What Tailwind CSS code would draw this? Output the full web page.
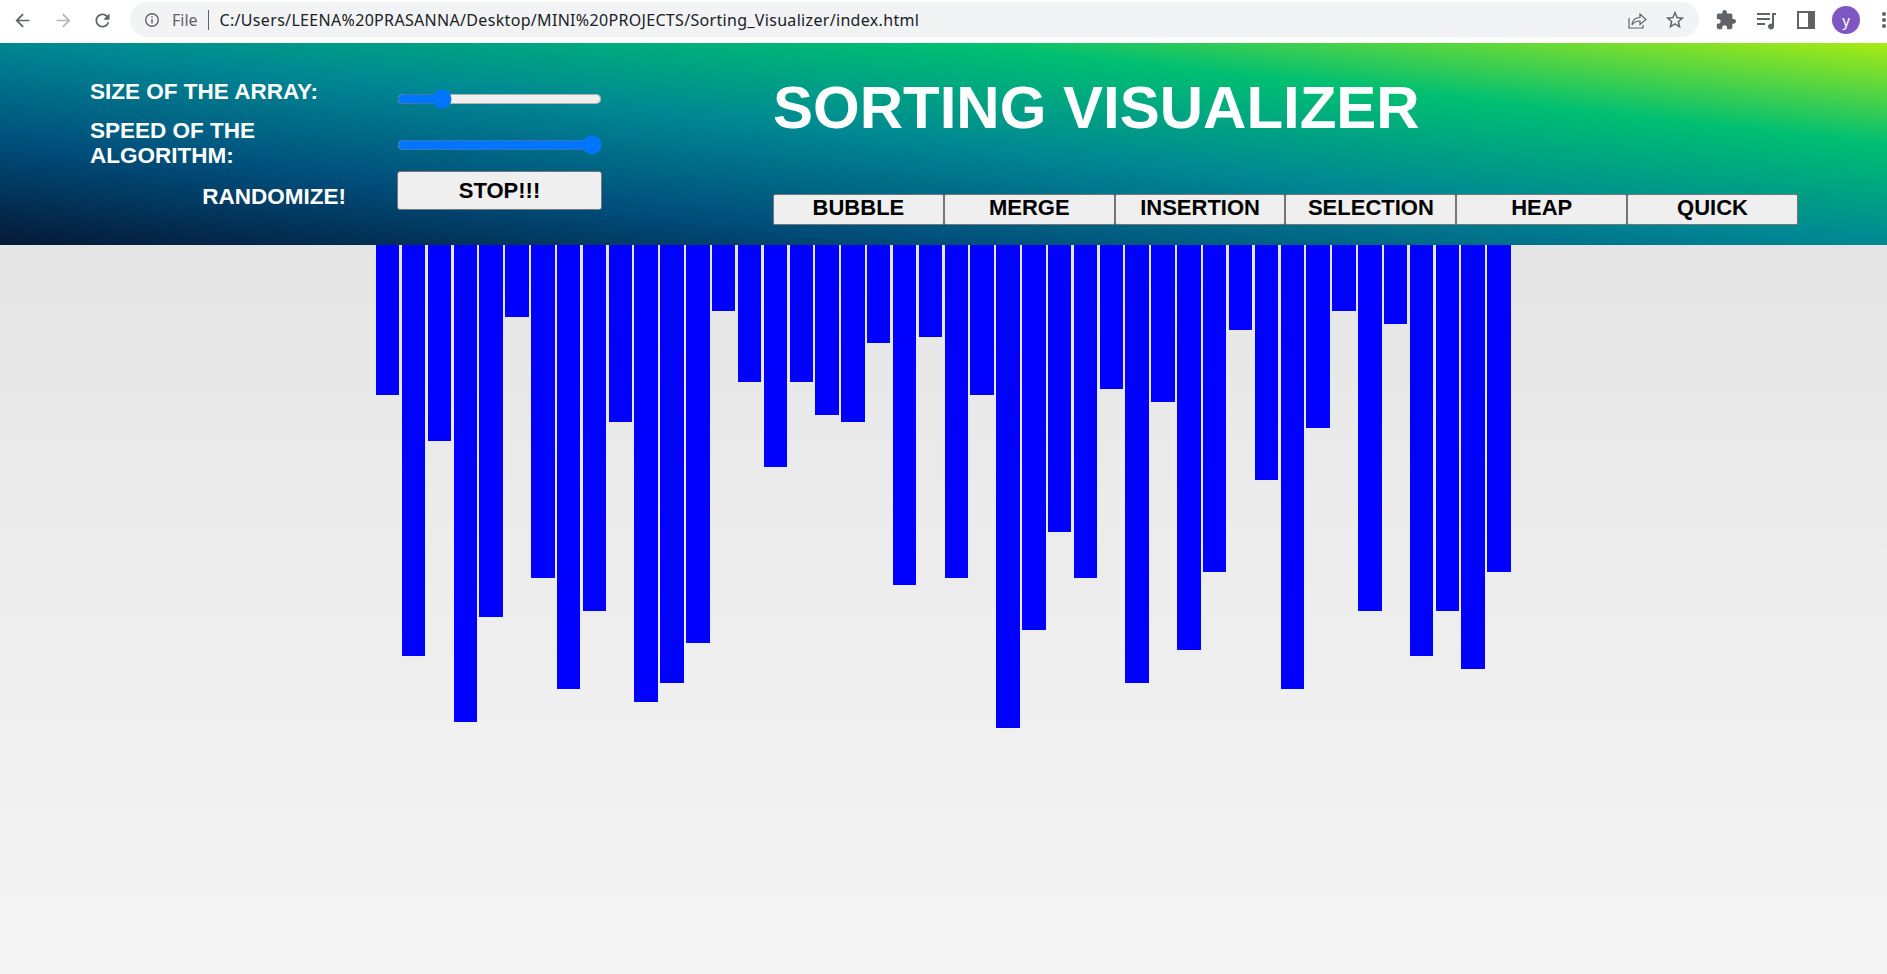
<!DOCTYPE html>
<html lang="en">
  <head>
    <meta charset="UTF-8" />
    <meta name="viewport" content="width=device-width, initial-scale=1.0" />
    <script src="https://cdn.jsdelivr.net/npm/@tailwindcss/browser@4"></script>
    <title>Sorting Visualizer</title>
  </head>

  <body class="h-[974px] w-[1887px] overflow-hidden flex flex-col bg-[linear-gradient(#e0e0e0,#f5f5f5)] font-['Liberation_Sans',sans-serif]">
    <!-- browser toolbar -->
    <div class="h-[43px] shrink-0 bg-white flex items-start pt-[2px] pl-[12px] text-[#5f6368]">
      <svg class="w-[21px] h-[21px] mt-[8px]" viewBox="0 0 24 24" fill="currentColor"><path d="M20 11H7.83l5.59-5.59L12 4l-8 8 8 8 1.41-1.41L7.83 13H20v-2z" /></svg>
      <svg class="w-[21px] h-[21px] mt-[8px] ml-[20px] text-[#b4b6b9]" viewBox="0 0 24 24" fill="currentColor"><path d="M4 11h12.17l-5.59-5.59L12 4l8 8-8 8-1.41-1.41L16.17 13H4v-2z" /></svg>
      <svg class="w-[21px] h-[21px] mt-[8px] ml-[18px]" viewBox="0 0 24 24" fill="currentColor"><path d="M17.65 6.35C16.2 4.9 14.21 4 12 4c-4.42 0-7.99 3.58-7.99 8s3.57 8 7.99 8c3.73 0 6.84-2.55 7.73-6h-2.08c-.82 2.33-3.04 4-5.65 4-3.31 0-6-2.69-6-6s2.69-6 6-6c1.66 0 3.14.69 4.22 1.78L13 11h7V4l-2.35 2.35z" /></svg>

      <div class="ml-[17px] w-[1570px] h-[35px] rounded-full bg-[#f1f3f4] flex items-center pl-[14px] pr-[13px]">
        <svg class="w-[16px] h-[16px] shrink-0" viewBox="0 0 16 16" fill="none" stroke="currentColor" stroke-width="1.4"><circle cx="8" cy="8" r="6.3" /><path d="M8 7v4.5M8 4.2v1.6" /></svg>
        <span class="ml-[12px] text-[16px] text-[#5f6368] font-['Noto_Sans',sans-serif]">File</span>
        <span class="ml-[10px] w-px h-[20px] bg-[#5f6368]"></span>
        <span class="ml-[11px] text-[16px] tracking-[0.32px] text-[#202124] font-['Noto_Sans',sans-serif] whitespace-nowrap">C:/Users/LEENA%20PRASANNA/Desktop/MINI%20PROJECTS/Sorting_Visualizer/index.html</span>
        <svg class="ml-auto w-[22px] h-[22px]" viewBox="0 0 22 22" fill="none" stroke="currentColor" stroke-width="1.2"><path d="M3 9v10h14v-3" /><path d="M6 16c.5-5 4-7.500 8-7.500V5l6 5.500-6 5v-3.500c-3 0-6 1-8 4z" /></svg>
        <svg class="ml-[16px] w-[22px] h-[22px]" viewBox="0 0 24 24" fill="currentColor"><path d="M22 9.24l-7.19-.62L12 2 9.19 8.63 2 9.24l5.46 4.73L5.82 21 12 17.27 18.18 21l-1.63-7.03L22 9.24zM12 15.4l-3.76 2.27 1-4.28-3.32-2.88 4.38-.38L12 6.1l1.71 4.04 4.38.38-3.32 2.88 1 4.28L12 15.4z" /></svg>
      </div>

      <svg class="ml-[16px] mt-[7px] w-[22px] h-[22px]" viewBox="0 0 24 24" fill="currentColor"><path d="M20.5 11H19V7c0-1.100-.9-2-2-2h-4V3.500C13 2.120 11.880 1 10.500 1S8 2.120 8 3.500V5H4c-1.100 0-1.990.9-1.990 2v3.800H3.500c1.490 0 2.700 1.210 2.700 2.700s-1.210 2.700-2.700 2.700H2V20c0 1.100.9 2 2 2h3.800v-1.500c0-1.490 1.210-2.700 2.700-2.700 1.490 0 2.700 1.210 2.700 2.700V22H17c1.100 0 2-.9 2-2v-4h1.500c1.380 0 2.500-1.120 2.500-2.500S21.880 11 20.500 11z" /></svg>
      <svg class="ml-[19px] mt-[8px] w-[21px] h-[21px]" viewBox="0 0 21 21" fill="currentColor"><path d="M1 3h13v2H1zM1 8h13v2H1zM1 13h8v2H1zM16 3h4v2h-2v11.500a3 3 0 1 1-2-2.800z" /></svg>
      <svg class="ml-[19px] mt-[8px] w-[20px] h-[20px]" viewBox="0 0 20 20" fill="currentColor"><path fill-rule="evenodd" d="M1 1h18v18H1zM3 3v14h9V3z" /></svg>
      <span class="ml-[16px] mt-[4px] w-[28px] h-[28px] rounded-full bg-[#7e57c2] text-white text-[15px] flex items-center justify-center font-['Noto_Sans',sans-serif]">y</span>
      <svg class="ml-[21px] mt-[9px] w-[6px] h-[18px] shrink-0" viewBox="0 0 6 18" fill="currentColor"><circle cx="3" cy="3" r="2" /><circle cx="3" cy="9" r="2" /><circle cx="3" cy="15" r="2" /></svg>
    </div>

    <!-- header -->
    <header class="h-[202px] shrink-0 flex bg-[linear-gradient(to_right_top,#051937,#004d7a,#008793,#00bf72,#a8eb12)] text-white font-bold">
      <div class="w-[397px] shrink-0 pl-[90px] pt-[36px] text-[22.5px] leading-[25px]">
        <div>SIZE OF THE ARRAY:</div>
        <div class="mt-[14px] w-[200px]">SPEED OF THE ALGORITHM:</div>
        <div class="mt-[15.5px] w-[256px] text-right">RANDOMIZE!</div>
      </div>
      <div class="w-[205px] shrink-0 pt-[46px] flex flex-col">
        <input type="range" min="0" max="100" value="19" class="w-[164px] [zoom:1.25] accent-[#0075ff]" />
        <input type="range" min="0" max="100" value="100" class="w-[164px] mt-[20.8px] [zoom:1.25] accent-[#0075ff]" />
        <button class="mt-[16px] h-[39px] bg-[#efefef] border border-[#767676] rounded-[3px] text-black text-[22px] leading-none">STOP!!!</button>
      </div>
      <div class="ml-[171px] w-[1025px] flex flex-col">
        <h1 class="text-[60px] leading-[69px] mt-[30px]">SORTING VISUALIZER</h1>
        <div class="flex mt-[52px]">
          <button class="flex-1 h-[31px] pb-[3px] bg-[#efefef] border border-[#767676] rounded-[2px] text-black text-[22px] leading-none">BUBBLE</button>
          <button class="flex-1 h-[31px] pb-[3px] bg-[#efefef] border border-[#767676] rounded-[2px] text-black text-[22px] leading-none">MERGE</button>
          <button class="flex-1 h-[31px] pb-[3px] bg-[#efefef] border border-[#767676] rounded-[2px] text-black text-[22px] leading-none">INSERTION</button>
          <button class="flex-1 h-[31px] pb-[3px] bg-[#efefef] border border-[#767676] rounded-[2px] text-black text-[22px] leading-none">SELECTION</button>
          <button class="flex-1 h-[31px] pb-[3px] bg-[#efefef] border border-[#767676] rounded-[2px] text-black text-[22px] leading-none">HEAP</button>
          <button class="flex-1 h-[31px] pb-[3px] bg-[#efefef] border border-[#767676] rounded-[2px] text-black text-[22px] leading-none">QUICK</button>
        </div>
      </div>
    </header>

    <!-- bars -->
    <div id="bars" class="flex gap-[2.4px] ml-[376px] w-[1135px]"></div>

    <script>
      // bottom edge of each bar, in page pixels
      var bottoms = [395, 656, 441, 722, 617, 317, 578, 689, 611, 422, 702, 683, 643, 311, 382, 467, 382, 415, 422, 343, 585, 337, 578, 395, 728, 630, 532, 578, 389, 683, 402, 650, 572, 330, 480, 689, 428, 311, 611, 324, 656, 611, 669, 572];
      var bars = document.getElementById("bars");
      for (var i = 0; i < bottoms.length; i++) {
        var bar = document.createElement("div");
        bar.classList.add("flex-1", "bg-[#0000ff]");
        bar.style.height = bottoms[i] - 245 + "px";
        bars.appendChild(bar);
      }
    </script>
  </body>
</html>
